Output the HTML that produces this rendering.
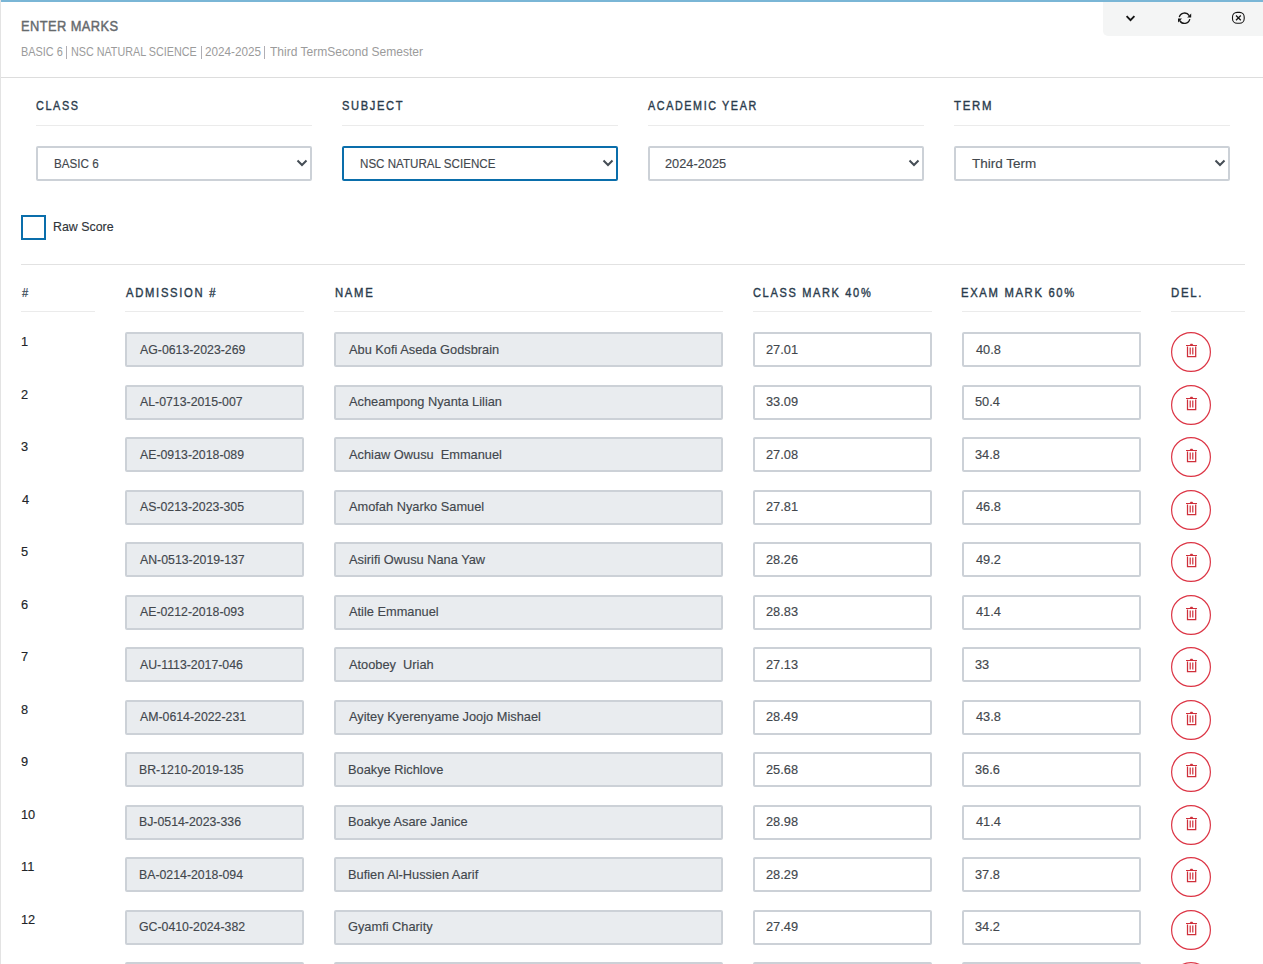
<!DOCTYPE html><html><head><meta charset="utf-8"><style>
*{margin:0;padding:0;box-sizing:border-box}
html,body{width:1263px;height:964px;overflow:hidden;background:#fff}
body{position:relative;font-family:"Liberation Sans",sans-serif}
.a{position:absolute}
.t{position:absolute;white-space:pre;line-height:1;transform-origin:0 0}
.inp{position:absolute;border:2px solid #ccd1d7;border-radius:2px;height:35px}
.ro{background:#e9ecef}
.wh{background:#fff}
.hl{position:absolute;height:1px;background:#ebebeb}
.del{position:absolute;width:40px;height:40px;border:1.5px solid #dc3545;border-radius:50%}
</style></head><body>

<div class="a" style="left:0;top:0;width:1px;height:964px;background:#e3e3e3"></div>
<div class="a" style="left:1px;top:0;width:1262px;height:2px;background:#7ab6d6"></div>
<div class="a" style="left:1103px;top:2px;width:160px;height:34px;background:#f4f5f5;border-bottom-left-radius:5px"></div>
<svg class="a" style="left:1103px;top:2px" width="160" height="34" viewBox="1103 2 160 34"><path d="M1126.6 16.2L1130.5 20.1L1134.4 16.2" fill="none" stroke="#151515" stroke-width="1.9"/><path d="M1179.3 17.2A5.4 5.4 0 0 1 1189.2 15.6" fill="none" stroke="#151515" stroke-width="1.35"/><path d="M1191.2 13.6V17.6H1187.2Z" fill="#151515"/><path d="M1189.8 19.2A5.4 5.4 0 0 1 1179.8 20.6" fill="none" stroke="#151515" stroke-width="1.35"/><path d="M1178 22.6V18.6H1182Z" fill="#151515"/><rect x="1232.5" y="12.4" width="11.7" height="10.9" rx="4.6" fill="none" stroke="#151515" stroke-width="1.1"/><path d="M1236 15.5L1240.8 20.3M1240.8 15.5L1236 20.3" stroke="#151515" stroke-width="1.25"/></svg>
<div class="a" style="left:66px;top:46px;width:1px;height:13px;background:#b0aeb4"></div>
<div class="a" style="left:201px;top:46px;width:1px;height:13px;background:#b0aeb4"></div>
<div class="a" style="left:264px;top:46px;width:1px;height:13px;background:#b0aeb4"></div>
<div class="hl" style="left:1px;top:77px;width:1262px;background:#dddddd"></div>
<div class="hl" style="left:36px;top:125px;width:276px"></div>
<div class="inp wh" style="left:36px;top:146px;width:276px"></div>
<svg class="a" style="left:295px;top:158px" width="14" height="10" viewBox="0 0 14 10"><path d="M2.5 2.5 L7 7 L11.5 2.5" fill="none" stroke="#454d55" stroke-width="2"/></svg>
<div class="hl" style="left:342px;top:125px;width:276px"></div>
<div class="inp wh" style="left:342px;top:146px;width:276px;border-color:#0a6eab"></div>
<svg class="a" style="left:601px;top:158px" width="14" height="10" viewBox="0 0 14 10"><path d="M2.5 2.5 L7 7 L11.5 2.5" fill="none" stroke="#454d55" stroke-width="2"/></svg>
<div class="hl" style="left:648px;top:125px;width:276px"></div>
<div class="inp wh" style="left:648px;top:146px;width:276px"></div>
<svg class="a" style="left:907px;top:158px" width="14" height="10" viewBox="0 0 14 10"><path d="M2.5 2.5 L7 7 L11.5 2.5" fill="none" stroke="#454d55" stroke-width="2"/></svg>
<div class="hl" style="left:954px;top:125px;width:276px"></div>
<div class="inp wh" style="left:954px;top:146px;width:276px"></div>
<svg class="a" style="left:1213px;top:158px" width="14" height="10" viewBox="0 0 14 10"><path d="M2.5 2.5 L7 7 L11.5 2.5" fill="none" stroke="#454d55" stroke-width="2"/></svg>
<div class="a" style="left:21px;top:215px;width:25px;height:25px;border:2.5px solid #0a6eab"></div>
<div class="hl" style="left:21px;top:264px;width:1224px;background:#e2e2e2"></div>
<div class="hl" style="left:21px;top:311px;width:74px"></div>
<div class="hl" style="left:125px;top:311px;width:179px"></div>
<div class="hl" style="left:334px;top:311px;width:389px"></div>
<div class="hl" style="left:753px;top:311px;width:179px"></div>
<div class="hl" style="left:962px;top:311px;width:179px"></div>
<div class="hl" style="left:1171px;top:311px;width:74px"></div>
<div class="inp ro" style="left:125px;top:332.0px;width:179px"></div>
<div class="inp ro" style="left:334px;top:332.0px;width:389px"></div>
<div class="inp wh" style="left:753px;top:332.0px;width:179px"></div>
<div class="inp wh" style="left:962px;top:332.0px;width:179px"></div>
<svg class="a" style="left:1171px;top:332.0px" width="40" height="40" viewBox="0 0 40 40"><circle cx="20" cy="20" r="19.4" fill="none" stroke="#dc3545" stroke-width="1.2"/><g fill="none" stroke="#cf2f3a"><path d="M15 13.5H26" stroke-width="1"/><path d="M16.5 14.4V24.6H24.7V14.4" stroke-width="1.25"/><path d="M19.2 15.5V22.5M21.8 15.5V22.5" stroke-width="1.2"/><path d="M18.6 13.3L19.6 11.7H21.4L22.4 13.3Z" fill="#cf2f3a" stroke="none"/></g></svg>
<div class="inp ro" style="left:125px;top:384.5px;width:179px"></div>
<div class="inp ro" style="left:334px;top:384.5px;width:389px"></div>
<div class="inp wh" style="left:753px;top:384.5px;width:179px"></div>
<div class="inp wh" style="left:962px;top:384.5px;width:179px"></div>
<svg class="a" style="left:1171px;top:384.5px" width="40" height="40" viewBox="0 0 40 40"><circle cx="20" cy="20" r="19.4" fill="none" stroke="#dc3545" stroke-width="1.2"/><g fill="none" stroke="#cf2f3a"><path d="M15 13.5H26" stroke-width="1"/><path d="M16.5 14.4V24.6H24.7V14.4" stroke-width="1.25"/><path d="M19.2 15.5V22.5M21.8 15.5V22.5" stroke-width="1.2"/><path d="M18.6 13.3L19.6 11.7H21.4L22.4 13.3Z" fill="#cf2f3a" stroke="none"/></g></svg>
<div class="inp ro" style="left:125px;top:437.0px;width:179px"></div>
<div class="inp ro" style="left:334px;top:437.0px;width:389px"></div>
<div class="inp wh" style="left:753px;top:437.0px;width:179px"></div>
<div class="inp wh" style="left:962px;top:437.0px;width:179px"></div>
<svg class="a" style="left:1171px;top:437.0px" width="40" height="40" viewBox="0 0 40 40"><circle cx="20" cy="20" r="19.4" fill="none" stroke="#dc3545" stroke-width="1.2"/><g fill="none" stroke="#cf2f3a"><path d="M15 13.5H26" stroke-width="1"/><path d="M16.5 14.4V24.6H24.7V14.4" stroke-width="1.25"/><path d="M19.2 15.5V22.5M21.8 15.5V22.5" stroke-width="1.2"/><path d="M18.6 13.3L19.6 11.7H21.4L22.4 13.3Z" fill="#cf2f3a" stroke="none"/></g></svg>
<div class="inp ro" style="left:125px;top:489.5px;width:179px"></div>
<div class="inp ro" style="left:334px;top:489.5px;width:389px"></div>
<div class="inp wh" style="left:753px;top:489.5px;width:179px"></div>
<div class="inp wh" style="left:962px;top:489.5px;width:179px"></div>
<svg class="a" style="left:1171px;top:489.5px" width="40" height="40" viewBox="0 0 40 40"><circle cx="20" cy="20" r="19.4" fill="none" stroke="#dc3545" stroke-width="1.2"/><g fill="none" stroke="#cf2f3a"><path d="M15 13.5H26" stroke-width="1"/><path d="M16.5 14.4V24.6H24.7V14.4" stroke-width="1.25"/><path d="M19.2 15.5V22.5M21.8 15.5V22.5" stroke-width="1.2"/><path d="M18.6 13.3L19.6 11.7H21.4L22.4 13.3Z" fill="#cf2f3a" stroke="none"/></g></svg>
<div class="inp ro" style="left:125px;top:542.0px;width:179px"></div>
<div class="inp ro" style="left:334px;top:542.0px;width:389px"></div>
<div class="inp wh" style="left:753px;top:542.0px;width:179px"></div>
<div class="inp wh" style="left:962px;top:542.0px;width:179px"></div>
<svg class="a" style="left:1171px;top:542.0px" width="40" height="40" viewBox="0 0 40 40"><circle cx="20" cy="20" r="19.4" fill="none" stroke="#dc3545" stroke-width="1.2"/><g fill="none" stroke="#cf2f3a"><path d="M15 13.5H26" stroke-width="1"/><path d="M16.5 14.4V24.6H24.7V14.4" stroke-width="1.25"/><path d="M19.2 15.5V22.5M21.8 15.5V22.5" stroke-width="1.2"/><path d="M18.6 13.3L19.6 11.7H21.4L22.4 13.3Z" fill="#cf2f3a" stroke="none"/></g></svg>
<div class="inp ro" style="left:125px;top:594.5px;width:179px"></div>
<div class="inp ro" style="left:334px;top:594.5px;width:389px"></div>
<div class="inp wh" style="left:753px;top:594.5px;width:179px"></div>
<div class="inp wh" style="left:962px;top:594.5px;width:179px"></div>
<svg class="a" style="left:1171px;top:594.5px" width="40" height="40" viewBox="0 0 40 40"><circle cx="20" cy="20" r="19.4" fill="none" stroke="#dc3545" stroke-width="1.2"/><g fill="none" stroke="#cf2f3a"><path d="M15 13.5H26" stroke-width="1"/><path d="M16.5 14.4V24.6H24.7V14.4" stroke-width="1.25"/><path d="M19.2 15.5V22.5M21.8 15.5V22.5" stroke-width="1.2"/><path d="M18.6 13.3L19.6 11.7H21.4L22.4 13.3Z" fill="#cf2f3a" stroke="none"/></g></svg>
<div class="inp ro" style="left:125px;top:647.0px;width:179px"></div>
<div class="inp ro" style="left:334px;top:647.0px;width:389px"></div>
<div class="inp wh" style="left:753px;top:647.0px;width:179px"></div>
<div class="inp wh" style="left:962px;top:647.0px;width:179px"></div>
<svg class="a" style="left:1171px;top:647.0px" width="40" height="40" viewBox="0 0 40 40"><circle cx="20" cy="20" r="19.4" fill="none" stroke="#dc3545" stroke-width="1.2"/><g fill="none" stroke="#cf2f3a"><path d="M15 13.5H26" stroke-width="1"/><path d="M16.5 14.4V24.6H24.7V14.4" stroke-width="1.25"/><path d="M19.2 15.5V22.5M21.8 15.5V22.5" stroke-width="1.2"/><path d="M18.6 13.3L19.6 11.7H21.4L22.4 13.3Z" fill="#cf2f3a" stroke="none"/></g></svg>
<div class="inp ro" style="left:125px;top:699.5px;width:179px"></div>
<div class="inp ro" style="left:334px;top:699.5px;width:389px"></div>
<div class="inp wh" style="left:753px;top:699.5px;width:179px"></div>
<div class="inp wh" style="left:962px;top:699.5px;width:179px"></div>
<svg class="a" style="left:1171px;top:699.5px" width="40" height="40" viewBox="0 0 40 40"><circle cx="20" cy="20" r="19.4" fill="none" stroke="#dc3545" stroke-width="1.2"/><g fill="none" stroke="#cf2f3a"><path d="M15 13.5H26" stroke-width="1"/><path d="M16.5 14.4V24.6H24.7V14.4" stroke-width="1.25"/><path d="M19.2 15.5V22.5M21.8 15.5V22.5" stroke-width="1.2"/><path d="M18.6 13.3L19.6 11.7H21.4L22.4 13.3Z" fill="#cf2f3a" stroke="none"/></g></svg>
<div class="inp ro" style="left:125px;top:752.0px;width:179px"></div>
<div class="inp ro" style="left:334px;top:752.0px;width:389px"></div>
<div class="inp wh" style="left:753px;top:752.0px;width:179px"></div>
<div class="inp wh" style="left:962px;top:752.0px;width:179px"></div>
<svg class="a" style="left:1171px;top:752.0px" width="40" height="40" viewBox="0 0 40 40"><circle cx="20" cy="20" r="19.4" fill="none" stroke="#dc3545" stroke-width="1.2"/><g fill="none" stroke="#cf2f3a"><path d="M15 13.5H26" stroke-width="1"/><path d="M16.5 14.4V24.6H24.7V14.4" stroke-width="1.25"/><path d="M19.2 15.5V22.5M21.8 15.5V22.5" stroke-width="1.2"/><path d="M18.6 13.3L19.6 11.7H21.4L22.4 13.3Z" fill="#cf2f3a" stroke="none"/></g></svg>
<div class="inp ro" style="left:125px;top:804.5px;width:179px"></div>
<div class="inp ro" style="left:334px;top:804.5px;width:389px"></div>
<div class="inp wh" style="left:753px;top:804.5px;width:179px"></div>
<div class="inp wh" style="left:962px;top:804.5px;width:179px"></div>
<svg class="a" style="left:1171px;top:804.5px" width="40" height="40" viewBox="0 0 40 40"><circle cx="20" cy="20" r="19.4" fill="none" stroke="#dc3545" stroke-width="1.2"/><g fill="none" stroke="#cf2f3a"><path d="M15 13.5H26" stroke-width="1"/><path d="M16.5 14.4V24.6H24.7V14.4" stroke-width="1.25"/><path d="M19.2 15.5V22.5M21.8 15.5V22.5" stroke-width="1.2"/><path d="M18.6 13.3L19.6 11.7H21.4L22.4 13.3Z" fill="#cf2f3a" stroke="none"/></g></svg>
<div class="inp ro" style="left:125px;top:857.0px;width:179px"></div>
<div class="inp ro" style="left:334px;top:857.0px;width:389px"></div>
<div class="inp wh" style="left:753px;top:857.0px;width:179px"></div>
<div class="inp wh" style="left:962px;top:857.0px;width:179px"></div>
<svg class="a" style="left:1171px;top:857.0px" width="40" height="40" viewBox="0 0 40 40"><circle cx="20" cy="20" r="19.4" fill="none" stroke="#dc3545" stroke-width="1.2"/><g fill="none" stroke="#cf2f3a"><path d="M15 13.5H26" stroke-width="1"/><path d="M16.5 14.4V24.6H24.7V14.4" stroke-width="1.25"/><path d="M19.2 15.5V22.5M21.8 15.5V22.5" stroke-width="1.2"/><path d="M18.6 13.3L19.6 11.7H21.4L22.4 13.3Z" fill="#cf2f3a" stroke="none"/></g></svg>
<div class="inp ro" style="left:125px;top:909.5px;width:179px"></div>
<div class="inp ro" style="left:334px;top:909.5px;width:389px"></div>
<div class="inp wh" style="left:753px;top:909.5px;width:179px"></div>
<div class="inp wh" style="left:962px;top:909.5px;width:179px"></div>
<svg class="a" style="left:1171px;top:909.5px" width="40" height="40" viewBox="0 0 40 40"><circle cx="20" cy="20" r="19.4" fill="none" stroke="#dc3545" stroke-width="1.2"/><g fill="none" stroke="#cf2f3a"><path d="M15 13.5H26" stroke-width="1"/><path d="M16.5 14.4V24.6H24.7V14.4" stroke-width="1.25"/><path d="M19.2 15.5V22.5M21.8 15.5V22.5" stroke-width="1.2"/><path d="M18.6 13.3L19.6 11.7H21.4L22.4 13.3Z" fill="#cf2f3a" stroke="none"/></g></svg>
<div class="inp ro" style="left:125px;top:962.0px;width:179px"></div>
<div class="inp ro" style="left:334px;top:962.0px;width:389px"></div>
<div class="inp wh" style="left:753px;top:962.0px;width:179px"></div>
<div class="inp wh" style="left:962px;top:962.0px;width:179px"></div>
<svg class="a" style="left:1171px;top:962.0px" width="40" height="40" viewBox="0 0 40 40"><circle cx="20" cy="20" r="19.4" fill="none" stroke="#dc3545" stroke-width="1.2"/><g fill="none" stroke="#cf2f3a"><path d="M15 13.5H26" stroke-width="1"/><path d="M16.5 14.4V24.6H24.7V14.4" stroke-width="1.25"/><path d="M19.2 15.5V22.5M21.8 15.5V22.5" stroke-width="1.2"/><path d="M18.6 13.3L19.6 11.7H21.4L22.4 13.3Z" fill="#cf2f3a" stroke="none"/></g></svg>
<div class="t" style="left:21.45px;top:17.90px;font-size:15.2px;font-weight:400;letter-spacing:0.5px;color:#666a6d;-webkit-text-stroke:0.45px #666a6d;transform:scaleX(0.8469)">ENTER MARKS</div>
<div class="t" style="left:20.89px;top:45.00px;font-size:13.5px;font-weight:400;letter-spacing:0px;color:#9b9b9b;transform:scaleX(0.8080)">BASIC 6</div>
<div class="t" style="left:71.10px;top:45.00px;font-size:13.5px;font-weight:400;letter-spacing:0px;color:#9b9b9b;transform:scaleX(0.7974)">NSC NATURAL SCIENCE</div>
<div class="t" style="left:204.73px;top:45.00px;font-size:13.5px;font-weight:400;letter-spacing:0px;color:#9b9b9b;transform:scaleX(0.8683)">2024-2025</div>
<div class="t" style="left:269.60px;top:45.00px;font-size:13.5px;font-weight:400;letter-spacing:0px;color:#9b9b9b;transform:scaleX(0.8918)">Third TermSecond Semester</div>
<div class="t" style="left:36.19px;top:99.00px;font-size:13.4px;font-weight:400;letter-spacing:2.0px;color:#2a3b4c;-webkit-text-stroke:0.4px #2a3b4c;transform:scaleX(0.8100)">CLASS</div>
<div class="t" style="left:342.27px;top:99.00px;font-size:13.4px;font-weight:400;letter-spacing:2.0px;color:#2a3b4c;-webkit-text-stroke:0.4px #2a3b4c;transform:scaleX(0.8292)">SUBJECT</div>
<div class="t" style="left:648.30px;top:99.00px;font-size:13.4px;font-weight:400;letter-spacing:2.0px;color:#2a3b4c;-webkit-text-stroke:0.4px #2a3b4c;transform:scaleX(0.8037)">ACADEMIC YEAR</div>
<div class="t" style="left:954.40px;top:99.00px;font-size:13.4px;font-weight:400;letter-spacing:2.0px;color:#2a3b4c;-webkit-text-stroke:0.4px #2a3b4c;transform:scaleX(0.8512)">TERM</div>
<div class="t" style="left:53.73px;top:157.00px;font-size:13.4px;font-weight:400;letter-spacing:0px;color:#42474d;-webkit-text-stroke:0.15px #42474d;transform:scaleX(0.8700)">BASIC 6</div>
<div class="t" style="left:359.93px;top:157.00px;font-size:13.4px;font-weight:400;letter-spacing:0px;color:#42474d;-webkit-text-stroke:0.15px #42474d;transform:scaleX(0.8665)">NSC NATURAL SCIENCE</div>
<div class="t" style="left:665.15px;top:157.00px;font-size:13.4px;font-weight:400;letter-spacing:0px;color:#42474d;-webkit-text-stroke:0.15px #42474d;transform:scaleX(0.9548)">2024-2025</div>
<div class="t" style="left:972.00px;top:157.00px;font-size:13.4px;font-weight:400;letter-spacing:0px;color:#42474d;-webkit-text-stroke:0.15px #42474d;transform:scaleX(1.0063)">Third Term</div>
<div class="t" style="left:52.98px;top:220.00px;font-size:13.4px;font-weight:400;letter-spacing:0px;color:#2f3439;-webkit-text-stroke:0.15px #2f3439;transform:scaleX(0.9250)">Raw Score</div>
<div class="t" style="left:21.77px;top:286.00px;font-size:13.4px;font-weight:400;letter-spacing:0px;color:#2a3b4c;-webkit-text-stroke:0.2px #2a3b4c;transform:scaleX(0.8333)">#</div>
<div class="t" style="left:125.70px;top:286.00px;font-size:13.4px;font-weight:400;letter-spacing:2.0px;color:#2a3b4c;-webkit-text-stroke:0.4px #2a3b4c;transform:scaleX(0.8410)">ADMISSION #</div>
<div class="t" style="left:334.76px;top:286.00px;font-size:13.4px;font-weight:400;letter-spacing:2.0px;color:#2a3b4c;-webkit-text-stroke:0.4px #2a3b4c;transform:scaleX(0.8442)">NAME</div>
<div class="t" style="left:752.58px;top:286.00px;font-size:13.4px;font-weight:400;letter-spacing:2.0px;color:#2a3b4c;-webkit-text-stroke:0.4px #2a3b4c;transform:scaleX(0.8241)">CLASS MARK 40%</div>
<div class="t" style="left:961.36px;top:286.00px;font-size:13.4px;font-weight:400;letter-spacing:2.0px;color:#2a3b4c;-webkit-text-stroke:0.4px #2a3b4c;transform:scaleX(0.8398)">EXAM MARK 60%</div>
<div class="t" style="left:1170.55px;top:286.00px;font-size:13.4px;font-weight:400;letter-spacing:2.0px;color:#2a3b4c;-webkit-text-stroke:0.4px #2a3b4c;transform:scaleX(0.8529)">DEL.</div>
<div class="t" style="left:20.94px;top:335.30px;font-size:13.4px;font-weight:400;letter-spacing:0px;color:#212529;-webkit-text-stroke:0.15px #212529;transform:scaleX(0.9558)">1</div>
<div class="t" style="left:139.50px;top:342.50px;font-size:13.4px;font-weight:400;letter-spacing:0px;color:#42474d;-webkit-text-stroke:0.15px #42474d;transform:scaleX(0.9193)">AG-0613-2023-269</div>
<div class="t" style="left:348.80px;top:342.50px;font-size:13.4px;font-weight:400;letter-spacing:0px;color:#42474d;-webkit-text-stroke:0.15px #42474d;transform:scaleX(0.9558)">Abu Kofi Aseda Godsbrain</div>
<div class="t" style="left:765.94px;top:342.50px;font-size:13.4px;font-weight:400;letter-spacing:0px;color:#42474d;-webkit-text-stroke:0.15px #42474d;transform:scaleX(0.9563)">27.01</div>
<div class="t" style="left:976.00px;top:342.50px;font-size:13.4px;font-weight:400;letter-spacing:0px;color:#42474d;-webkit-text-stroke:0.15px #42474d;transform:scaleX(0.9563)">40.8</div>
<div class="t" style="left:20.94px;top:387.80px;font-size:13.4px;font-weight:400;letter-spacing:0px;color:#212529;-webkit-text-stroke:0.15px #212529;transform:scaleX(0.9558)">2</div>
<div class="t" style="left:139.50px;top:395.00px;font-size:13.4px;font-weight:400;letter-spacing:0px;color:#42474d;-webkit-text-stroke:0.15px #42474d;transform:scaleX(0.9193)">AL-0713-2015-007</div>
<div class="t" style="left:348.80px;top:395.00px;font-size:13.4px;font-weight:400;letter-spacing:0px;color:#42474d;-webkit-text-stroke:0.15px #42474d;transform:scaleX(0.9558)">Acheampong Nyanta Lilian</div>
<div class="t" style="left:765.94px;top:395.00px;font-size:13.4px;font-weight:400;letter-spacing:0px;color:#42474d;-webkit-text-stroke:0.15px #42474d;transform:scaleX(0.9563)">33.09</div>
<div class="t" style="left:975.04px;top:395.00px;font-size:13.4px;font-weight:400;letter-spacing:0px;color:#42474d;-webkit-text-stroke:0.15px #42474d;transform:scaleX(0.9563)">50.4</div>
<div class="t" style="left:20.94px;top:440.30px;font-size:13.4px;font-weight:400;letter-spacing:0px;color:#212529;-webkit-text-stroke:0.15px #212529;transform:scaleX(0.9558)">3</div>
<div class="t" style="left:139.50px;top:447.50px;font-size:13.4px;font-weight:400;letter-spacing:0px;color:#42474d;-webkit-text-stroke:0.15px #42474d;transform:scaleX(0.9193)">AE-0913-2018-089</div>
<div class="t" style="left:348.80px;top:447.50px;font-size:13.4px;font-weight:400;letter-spacing:0px;color:#42474d;-webkit-text-stroke:0.15px #42474d;transform:scaleX(0.9558)">Achiaw Owusu  Emmanuel</div>
<div class="t" style="left:765.94px;top:447.50px;font-size:13.4px;font-weight:400;letter-spacing:0px;color:#42474d;-webkit-text-stroke:0.15px #42474d;transform:scaleX(0.9563)">27.08</div>
<div class="t" style="left:975.04px;top:447.50px;font-size:13.4px;font-weight:400;letter-spacing:0px;color:#42474d;-webkit-text-stroke:0.15px #42474d;transform:scaleX(0.9563)">34.8</div>
<div class="t" style="left:21.90px;top:492.80px;font-size:13.4px;font-weight:400;letter-spacing:0px;color:#212529;-webkit-text-stroke:0.15px #212529;transform:scaleX(0.9558)">4</div>
<div class="t" style="left:139.50px;top:500.00px;font-size:13.4px;font-weight:400;letter-spacing:0px;color:#42474d;-webkit-text-stroke:0.15px #42474d;transform:scaleX(0.9193)">AS-0213-2023-305</div>
<div class="t" style="left:348.80px;top:500.00px;font-size:13.4px;font-weight:400;letter-spacing:0px;color:#42474d;-webkit-text-stroke:0.15px #42474d;transform:scaleX(0.9558)">Amofah Nyarko Samuel</div>
<div class="t" style="left:765.94px;top:500.00px;font-size:13.4px;font-weight:400;letter-spacing:0px;color:#42474d;-webkit-text-stroke:0.15px #42474d;transform:scaleX(0.9563)">27.81</div>
<div class="t" style="left:976.00px;top:500.00px;font-size:13.4px;font-weight:400;letter-spacing:0px;color:#42474d;-webkit-text-stroke:0.15px #42474d;transform:scaleX(0.9563)">46.8</div>
<div class="t" style="left:20.94px;top:545.30px;font-size:13.4px;font-weight:400;letter-spacing:0px;color:#212529;-webkit-text-stroke:0.15px #212529;transform:scaleX(0.9558)">5</div>
<div class="t" style="left:139.50px;top:552.50px;font-size:13.4px;font-weight:400;letter-spacing:0px;color:#42474d;-webkit-text-stroke:0.15px #42474d;transform:scaleX(0.9193)">AN-0513-2019-137</div>
<div class="t" style="left:348.80px;top:552.50px;font-size:13.4px;font-weight:400;letter-spacing:0px;color:#42474d;-webkit-text-stroke:0.15px #42474d;transform:scaleX(0.9558)">Asirifi Owusu Nana Yaw</div>
<div class="t" style="left:765.94px;top:552.50px;font-size:13.4px;font-weight:400;letter-spacing:0px;color:#42474d;-webkit-text-stroke:0.15px #42474d;transform:scaleX(0.9563)">28.26</div>
<div class="t" style="left:976.00px;top:552.50px;font-size:13.4px;font-weight:400;letter-spacing:0px;color:#42474d;-webkit-text-stroke:0.15px #42474d;transform:scaleX(0.9563)">49.2</div>
<div class="t" style="left:20.94px;top:597.80px;font-size:13.4px;font-weight:400;letter-spacing:0px;color:#212529;-webkit-text-stroke:0.15px #212529;transform:scaleX(0.9558)">6</div>
<div class="t" style="left:139.50px;top:605.00px;font-size:13.4px;font-weight:400;letter-spacing:0px;color:#42474d;-webkit-text-stroke:0.15px #42474d;transform:scaleX(0.9193)">AE-0212-2018-093</div>
<div class="t" style="left:348.80px;top:605.00px;font-size:13.4px;font-weight:400;letter-spacing:0px;color:#42474d;-webkit-text-stroke:0.15px #42474d;transform:scaleX(0.9558)">Atile Emmanuel</div>
<div class="t" style="left:765.94px;top:605.00px;font-size:13.4px;font-weight:400;letter-spacing:0px;color:#42474d;-webkit-text-stroke:0.15px #42474d;transform:scaleX(0.9563)">28.83</div>
<div class="t" style="left:976.00px;top:605.00px;font-size:13.4px;font-weight:400;letter-spacing:0px;color:#42474d;-webkit-text-stroke:0.15px #42474d;transform:scaleX(0.9563)">41.4</div>
<div class="t" style="left:20.94px;top:650.30px;font-size:13.4px;font-weight:400;letter-spacing:0px;color:#212529;-webkit-text-stroke:0.15px #212529;transform:scaleX(0.9558)">7</div>
<div class="t" style="left:139.50px;top:657.50px;font-size:13.4px;font-weight:400;letter-spacing:0px;color:#42474d;-webkit-text-stroke:0.15px #42474d;transform:scaleX(0.9193)">AU-1113-2017-046</div>
<div class="t" style="left:348.80px;top:657.50px;font-size:13.4px;font-weight:400;letter-spacing:0px;color:#42474d;-webkit-text-stroke:0.15px #42474d;transform:scaleX(0.9558)">Atoobey  Uriah</div>
<div class="t" style="left:765.94px;top:657.50px;font-size:13.4px;font-weight:400;letter-spacing:0px;color:#42474d;-webkit-text-stroke:0.15px #42474d;transform:scaleX(0.9563)">27.13</div>
<div class="t" style="left:975.04px;top:657.50px;font-size:13.4px;font-weight:400;letter-spacing:0px;color:#42474d;-webkit-text-stroke:0.15px #42474d;transform:scaleX(0.9563)">33</div>
<div class="t" style="left:20.94px;top:702.80px;font-size:13.4px;font-weight:400;letter-spacing:0px;color:#212529;-webkit-text-stroke:0.15px #212529;transform:scaleX(0.9558)">8</div>
<div class="t" style="left:139.50px;top:710.00px;font-size:13.4px;font-weight:400;letter-spacing:0px;color:#42474d;-webkit-text-stroke:0.15px #42474d;transform:scaleX(0.9193)">AM-0614-2022-231</div>
<div class="t" style="left:348.80px;top:710.00px;font-size:13.4px;font-weight:400;letter-spacing:0px;color:#42474d;-webkit-text-stroke:0.15px #42474d;transform:scaleX(0.9558)">Ayitey Kyerenyame Joojo Mishael</div>
<div class="t" style="left:765.94px;top:710.00px;font-size:13.4px;font-weight:400;letter-spacing:0px;color:#42474d;-webkit-text-stroke:0.15px #42474d;transform:scaleX(0.9563)">28.49</div>
<div class="t" style="left:976.00px;top:710.00px;font-size:13.4px;font-weight:400;letter-spacing:0px;color:#42474d;-webkit-text-stroke:0.15px #42474d;transform:scaleX(0.9563)">43.8</div>
<div class="t" style="left:20.94px;top:755.30px;font-size:13.4px;font-weight:400;letter-spacing:0px;color:#212529;-webkit-text-stroke:0.15px #212529;transform:scaleX(0.9558)">9</div>
<div class="t" style="left:138.58px;top:762.50px;font-size:13.4px;font-weight:400;letter-spacing:0px;color:#42474d;-webkit-text-stroke:0.15px #42474d;transform:scaleX(0.9193)">BR-1210-2019-135</div>
<div class="t" style="left:347.84px;top:762.50px;font-size:13.4px;font-weight:400;letter-spacing:0px;color:#42474d;-webkit-text-stroke:0.15px #42474d;transform:scaleX(0.9558)">Boakye Richlove</div>
<div class="t" style="left:765.94px;top:762.50px;font-size:13.4px;font-weight:400;letter-spacing:0px;color:#42474d;-webkit-text-stroke:0.15px #42474d;transform:scaleX(0.9563)">25.68</div>
<div class="t" style="left:975.04px;top:762.50px;font-size:13.4px;font-weight:400;letter-spacing:0px;color:#42474d;-webkit-text-stroke:0.15px #42474d;transform:scaleX(0.9563)">36.6</div>
<div class="t" style="left:20.94px;top:807.80px;font-size:13.4px;font-weight:400;letter-spacing:0px;color:#212529;-webkit-text-stroke:0.15px #212529;transform:scaleX(0.9558)">10</div>
<div class="t" style="left:138.58px;top:815.00px;font-size:13.4px;font-weight:400;letter-spacing:0px;color:#42474d;-webkit-text-stroke:0.15px #42474d;transform:scaleX(0.9193)">BJ-0514-2023-336</div>
<div class="t" style="left:347.84px;top:815.00px;font-size:13.4px;font-weight:400;letter-spacing:0px;color:#42474d;-webkit-text-stroke:0.15px #42474d;transform:scaleX(0.9558)">Boakye Asare Janice</div>
<div class="t" style="left:765.94px;top:815.00px;font-size:13.4px;font-weight:400;letter-spacing:0px;color:#42474d;-webkit-text-stroke:0.15px #42474d;transform:scaleX(0.9563)">28.98</div>
<div class="t" style="left:976.00px;top:815.00px;font-size:13.4px;font-weight:400;letter-spacing:0px;color:#42474d;-webkit-text-stroke:0.15px #42474d;transform:scaleX(0.9563)">41.4</div>
<div class="t" style="left:20.94px;top:860.30px;font-size:13.4px;font-weight:400;letter-spacing:0px;color:#212529;-webkit-text-stroke:0.15px #212529;transform:scaleX(0.9558)">11</div>
<div class="t" style="left:138.58px;top:867.50px;font-size:13.4px;font-weight:400;letter-spacing:0px;color:#42474d;-webkit-text-stroke:0.15px #42474d;transform:scaleX(0.9193)">BA-0214-2018-094</div>
<div class="t" style="left:347.84px;top:867.50px;font-size:13.4px;font-weight:400;letter-spacing:0px;color:#42474d;-webkit-text-stroke:0.15px #42474d;transform:scaleX(0.9558)">Bufien Al-Hussien Aarif</div>
<div class="t" style="left:765.94px;top:867.50px;font-size:13.4px;font-weight:400;letter-spacing:0px;color:#42474d;-webkit-text-stroke:0.15px #42474d;transform:scaleX(0.9563)">28.29</div>
<div class="t" style="left:975.04px;top:867.50px;font-size:13.4px;font-weight:400;letter-spacing:0px;color:#42474d;-webkit-text-stroke:0.15px #42474d;transform:scaleX(0.9563)">37.8</div>
<div class="t" style="left:20.94px;top:912.80px;font-size:13.4px;font-weight:400;letter-spacing:0px;color:#212529;-webkit-text-stroke:0.15px #212529;transform:scaleX(0.9558)">12</div>
<div class="t" style="left:138.58px;top:920.00px;font-size:13.4px;font-weight:400;letter-spacing:0px;color:#42474d;-webkit-text-stroke:0.15px #42474d;transform:scaleX(0.9193)">GC-0410-2024-382</div>
<div class="t" style="left:347.84px;top:920.00px;font-size:13.4px;font-weight:400;letter-spacing:0px;color:#42474d;-webkit-text-stroke:0.15px #42474d;transform:scaleX(0.9558)">Gyamfi Charity</div>
<div class="t" style="left:765.94px;top:920.00px;font-size:13.4px;font-weight:400;letter-spacing:0px;color:#42474d;-webkit-text-stroke:0.15px #42474d;transform:scaleX(0.9563)">27.49</div>
<div class="t" style="left:975.04px;top:920.00px;font-size:13.4px;font-weight:400;letter-spacing:0px;color:#42474d;-webkit-text-stroke:0.15px #42474d;transform:scaleX(0.9563)">34.2</div>
</body></html>
